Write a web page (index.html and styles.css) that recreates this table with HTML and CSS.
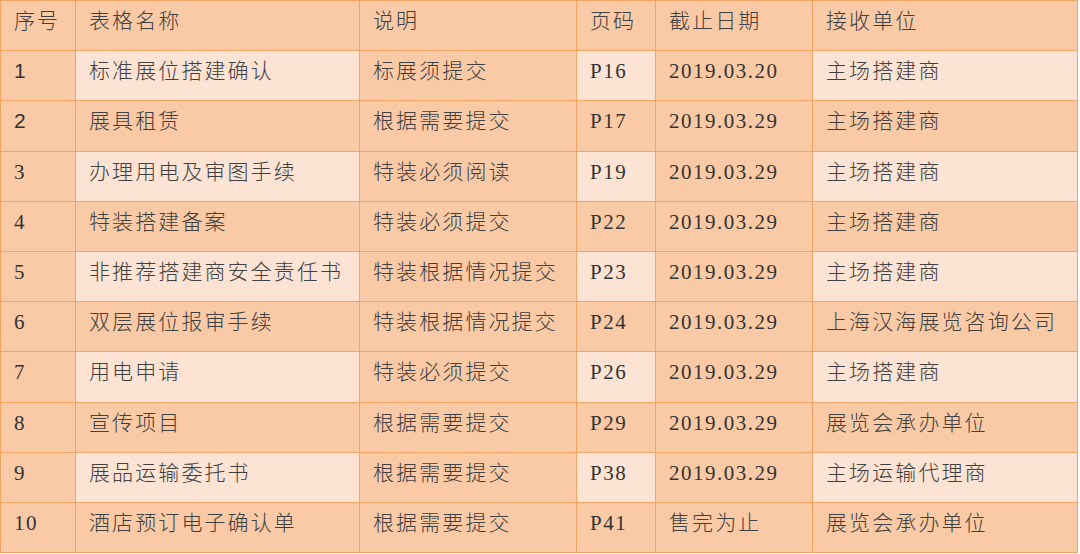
FILE: index.html
```html
<!DOCTYPE html>
<html lang="zh">
<head>
<meta charset="utf-8">
<title>表格</title>
<link rel="stylesheet" href="styles.css">
</head>
<body>
<table class="forms">
  <colgroup>
    <col class="c-no"><col class="c-name"><col class="c-desc"><col class="c-page"><col class="c-date"><col class="c-recv">
  </colgroup>
  <tr class="head">
    <td>序号</td><td>表格名称</td><td>说明</td><td>页码</td><td>截止日期</td><td>接收单位</td>
  </tr>
  <tr class="odd">
    <td class="num sans">1</td><td>标准展位搭建确认</td><td>标展须提交</td><td class="num">P16</td><td class="num">2019.03.20</td><td>主场搭建商</td>
  </tr>
  <tr>
    <td class="num sans">2</td><td>展具租赁</td><td>根据需要提交</td><td class="num">P17</td><td class="num">2019.03.29</td><td>主场搭建商</td>
  </tr>
  <tr class="odd">
    <td class="num">3</td><td>办理用电及审图手续</td><td>特装必须阅读</td><td class="num">P19</td><td class="num">2019.03.29</td><td>主场搭建商</td>
  </tr>
  <tr>
    <td class="num">4</td><td>特装搭建备案</td><td>特装必须提交</td><td class="num">P22</td><td class="num">2019.03.29</td><td>主场搭建商</td>
  </tr>
  <tr class="odd">
    <td class="num">5</td><td>非推荐搭建商安全责任书</td><td>特装根据情况提交</td><td class="num">P23</td><td class="num">2019.03.29</td><td>主场搭建商</td>
  </tr>
  <tr>
    <td class="num">6</td><td>双层展位报审手续</td><td>特装根据情况提交</td><td class="num">P24</td><td class="num">2019.03.29</td><td>上海汉海展览咨询公司</td>
  </tr>
  <tr class="odd">
    <td class="num">7</td><td>用电申请</td><td>特装必须提交</td><td class="num">P26</td><td class="num">2019.03.29</td><td>主场搭建商</td>
  </tr>
  <tr>
    <td class="num">8</td><td>宣传项目</td><td>根据需要提交</td><td class="num">P29</td><td class="num">2019.03.29</td><td>展览会承办单位</td>
  </tr>
  <tr class="odd">
    <td class="num">9</td><td>展品运输委托书</td><td>根据需要提交</td><td class="num">P38</td><td class="num">2019.03.29</td><td>主场运输代理商</td>
  </tr>
  <tr>
    <td class="num">10</td><td>酒店预订电子确认单</td><td>根据需要提交</td><td class="num">P41</td><td>售完为止</td><td>展览会承办单位</td>
  </tr>
</table>
</body>
</html>
```

FILE: styles.css
```css
html, body {
  margin: 0;
  padding: 0;
  background: #ffffff;
}

.forms {
  border-collapse: collapse;
  table-layout: fixed;
  width: 1077px;
  font-family: "Liberation Serif", "Noto Sans CJK SC", serif;
  color: #404040;
  font-size: 21px;
  letter-spacing: 2.1px;
}

.c-no { width: 75px; }
.c-name { width: 284px; }
.c-desc { width: 217px; }
.c-page { width: 79px; }
.c-date { width: 157px; }
.c-recv { width: 265px; }

.forms td {
  height: 50.2px;
  box-sizing: border-box;
  padding: 6px 0 0 13px;
  vertical-align: top;
  line-height: 28px;
  background: #f9caa5;
  border: 1.5px solid #f2a465;
  white-space: nowrap;
  font-weight: 300;
}

.forms tr.odd td:nth-child(2),
.forms tr.odd td:nth-child(4),
.forms tr.odd td:nth-child(6) {
  background: #fce3d3;
}

.forms td.num {
  letter-spacing: 1.5px;
  font-weight: 400;
  color: #333333;
}

.forms td.sans {
  font-family: "Liberation Sans", sans-serif;
}
```
